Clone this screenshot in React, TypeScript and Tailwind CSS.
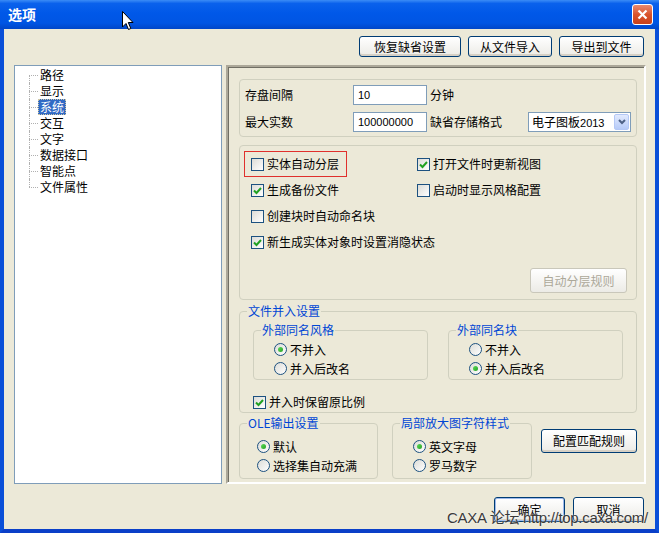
import React from "react";

const cjk = { fontFamily: '"Noto Sans CJK SC", "Liberation Sans", sans-serif' };

function Check({ on }: { on?: boolean }) {
  return (
    <span className="flex h-[13px] w-[13px] shrink-0 items-center justify-center border border-[#1C5180] bg-linear-to-br from-[#DCDCD7] to-white">
      {on && (
        <svg width="9" height="9" viewBox="0 0 9 9">
          <path d="M1 4.5 L3.5 7 L8 2" fill="none" stroke="#21A121" strokeWidth="2" />
        </svg>
      )}
    </span>
  );
}

function Radio({ on }: { on?: boolean }) {
  return (
    <span className="flex h-[13px] w-[13px] shrink-0 items-center justify-center rounded-full border border-[#1C5180] bg-linear-to-br from-[#DCDCD7] to-white">
      {on && <span className="h-[5px] w-[5px] rounded-full bg-linear-to-br from-[#5EDB5A] to-[#21A121]" />}
    </span>
  );
}

function CheckRow({ on, label, className = "" }: { on?: boolean; label: string; className?: string }) {
  return (
    <div className={`flex items-center gap-[3px] ${className}`}>
      <Check on={on} />
      <span>{label}</span>
    </div>
  );
}

function RadioRow({ on, label }: { on?: boolean; label: string }) {
  return (
    <div className="flex h-[19px] items-center gap-[3px]">
      <Radio on={on} />
      <span>{label}</span>
    </div>
  );
}

function XpButton({ label, className = "", disabled, def }: { label: string; className?: string; disabled?: boolean; def?: boolean }) {
  return (
    <div
      className={`flex items-center justify-center rounded-[3px] border bg-linear-to-b from-white to-[#ECEBE6] ${
        disabled
          ? "border-[#C9C7BA] text-[#ACA899]"
          : def
          ? "border-[#003C74] shadow-[inset_0_0_0_1px_#9DB9EB,inset_0_-2px_0_#D6D0C5]"
          : "border-[#003C74] shadow-[inset_0_-2px_0_#D6D0C5]"
      } ${className}`}
    >
      {label}
    </div>
  );
}

function Group({ legend, className = "", children }: { legend?: string; className?: string; children?: React.ReactNode }) {
  return (
    <div className={`relative rounded-[4px] border border-[#D0D0BF] ${className}`}>
      {legend && (
        <span className="absolute -top-[9px] left-[7px] bg-[#ECE9D8] px-[1px] leading-[16px] text-[#0046D5]">{legend}</span>
      )}
      {children}
    </div>
  );
}

const tree = ["路径", "显示", "系统", "交互", "文字", "数据接口", "智能点", "文件属性"];

export default function App() {
  return (
    <div className="relative flex h-[533px] w-[659px] flex-col overflow-hidden text-[12px] text-black" style={cjk}>
      {/* title bar */}
      <div className="flex h-[29px] shrink-0 items-center justify-between bg-[linear-gradient(180deg,#3B8CF6_0%,#0A61EC_12%,#0058E8_45%,#0055E3_80%,#0046C8_100%)] pl-[8px] pr-[6px]">
        <span className="text-[14px] font-bold text-white">选项</span>
        <div className="flex h-[21px] w-[21px] items-center justify-center rounded-[3px] border border-white bg-linear-to-b from-[#E98A6F] via-[#D9532B] to-[#C9401A]">
          <svg width="11" height="11" viewBox="0 0 11 11">
            <path d="M1.5 1.5 L9.5 9.5 M9.5 1.5 L1.5 9.5" stroke="white" strokeWidth="2.2" />
          </svg>
        </div>
      </div>

      {/* body */}
      <div className="flex flex-1 flex-col border-x-4 border-b-4 border-x-[#0A4FD8] border-b-[#0A3FC8] bg-[#ECE9D8]">
        <div className="mt-[7px] flex justify-end gap-[7px] pr-[11px]">
          <XpButton label="恢复缺省设置" className="h-[21px] w-[102px]" />
          <XpButton label="从文件导入" className="h-[21px] w-[84px]" />
          <XpButton label="导出到文件" className="h-[21px] w-[85px]" />
        </div>

        <div className="mt-[8px] flex pl-[10px]">
          {/* tree */}
          <div className="h-[419px] w-[208px] border border-[#7F9DB9] bg-white pt-[1px]">
            {tree.map((t, i) => (
              <div key={t} className="flex h-[16px] items-center pl-[14px]">
                <span className="relative h-[16px] w-[9px]">
                  <span
                    className={`absolute left-0 border-l border-dotted border-[#B0B0B0] ${
                      i === 0 ? "top-[8px] h-[8px]" : i === tree.length - 1 ? "top-0 h-[8px]" : "top-0 h-[16px]"
                    }`}
                  />
                  <span className="absolute left-0 top-[8px] w-[9px] border-t border-dotted border-[#B0B0B0]" />
                </span>
                <span
                  className={`px-[1px] leading-[14px] ${
                    t === "系统" ? "border border-dotted border-[#CEC7A5] bg-[#316AC5] text-white" : "border border-transparent"
                  }`}
                >
                  {t}
                </span>
              </div>
            ))}
          </div>

          {/* panel */}
          <div className="ml-[4px] h-[419px] w-[420px] border-2 border-t-[#ACA899] border-l-[#ACA899] border-r-white border-b-white pl-[11px] pt-[12px] shadow-[inset_1px_1px_0_#716F64]">
            <Group className="h-[58px] w-[398px] pl-[5px] pt-[5px]">
              <div className="flex h-[20px] items-center">
                <span className="w-[108px]">存盘间隔</span>
                <div className="flex h-[20px] w-[74px] items-center border border-[#7F9DB9] bg-white pl-[4px] font-['Liberation_Sans'] text-[11px]">10</div>
                <span className="ml-[3px]">分钟</span>
              </div>
              <div className="mt-[7px] flex h-[20px] items-center">
                <span className="w-[108px]">最大实数</span>
                <div className="flex h-[20px] w-[74px] items-center border border-[#7F9DB9] bg-white pl-[4px] font-['Liberation_Sans'] text-[11px]">100000000</div>
                <span className="ml-[3px] w-[98px]">缺省存储格式</span>
                <div className="flex h-[20px] w-[103px] items-center justify-between border border-[#7F9DB9] bg-white pl-[3px] pr-[1px]">
                  <span>
                    电子图板<span className="font-['Liberation_Sans'] text-[11px]">2013</span>
                  </span>
                  <span className="flex h-[16px] w-[15px] items-center justify-center rounded-[2px] border border-[#B4C8F6] bg-linear-to-b from-[#E2EAFE] to-[#B6CBF8]">
                    <svg width="8" height="6" viewBox="0 0 8 6">
                      <path d="M1 1 L4 4 L7 1" fill="none" stroke="#4D6185" strokeWidth="2" />
                    </svg>
                  </span>
                </div>
              </div>
            </Group>

            <Group className="mt-[8px] flex h-[155px] w-[398px] flex-col pl-[4px] pt-[5px]">
              <div className="grid grid-cols-[173px_1fr]">
                <div className="flex h-[26px] w-[103px] items-center border border-[#E0302C] pl-[6px]">
                  <CheckRow label="实体自动分层" />
                </div>
                <div className="flex h-[26px] items-center">
                  <CheckRow on label="打开文件时更新视图" />
                </div>
                <div className="flex h-[26px] items-center pl-[7px]">
                  <CheckRow on label="生成备份文件" />
                </div>
                <div className="flex h-[26px] items-center">
                  <CheckRow label="启动时显示风格配置" />
                </div>
                <div className="col-span-2 flex h-[26px] items-center pl-[7px]">
                  <CheckRow label="创建块时自动命名块" />
                </div>
                <div className="col-span-2 flex h-[26px] items-center pl-[7px]">
                  <CheckRow on label="新生成实体对象时设置消隐状态" />
                </div>
              </div>
              <div className="mt-[13px] flex justify-end pr-[9px]">
                <XpButton disabled label="自动分层规则" className="h-[25px] w-[97px]" />
              </div>
            </Group>

            <Group legend="文件并入设置" className="mt-[11px] h-[102px] w-[398px] pl-[13px] pt-[18px]">
              <div className="flex gap-[20px]">
                <Group legend="外部同名风格" className="h-[50px] w-[175px] pl-[20px] pt-[9px]">
                  <RadioRow on label="不并入" />
                  <RadioRow label="并入后改名" />
                </Group>
                <Group legend="外部同名块" className="h-[50px] w-[175px] pl-[20px] pt-[9px]">
                  <RadioRow label="不并入" />
                  <RadioRow on label="并入后改名" />
                </Group>
              </div>
              <CheckRow on label="并入时保留原比例" className="mt-[13px] gap-[2px]" />
            </Group>

            <div className="mt-[10px] flex">
              <Group legend="OLE输出设置" className="h-[56px] w-[139px] pl-[17px] pt-[13px]">
                <RadioRow on label="默认" />
                <RadioRow label="选择集自动充满" />
              </Group>
              <Group legend="局部放大图字符样式" className="ml-[14px] h-[56px] w-[140px] pl-[20px] pt-[13px]">
                <RadioRow on label="英文字母" />
                <RadioRow label="罗马数字" />
              </Group>
              <XpButton label="配置匹配规则" className="ml-[9px] mt-[6px] h-[24px] w-[96px]" />
            </div>
          </div>
        </div>

        <div className="mt-[13px] flex justify-end gap-[8px] pr-[11px]">
          <XpButton def label="确定" className="h-[25px] w-[71px]" />
          <XpButton label="取消" className="h-[25px] w-[71px]" />
        </div>
      </div>

      {/* watermark */}
      <span
        className="absolute left-[447px] top-[507px] text-[15px] tracking-[-0.3px] text-[#3A3A3A] [text-shadow:0_0_2px_#fff]"
        style={{ fontFamily: '"Liberation Sans", "Noto Sans CJK SC", sans-serif' }}
      >
        CAXA 论坛 http://top.caxa.com/
      </span>

      {/* mouse pointer */}
      <svg className="absolute left-[122px] top-[11px]" width="13" height="21" viewBox="0 0 13 21">
        <path d="M0.5 0.5 L0.5 16 L4 12.5 L6.5 18.5 L8.8 17.5 L6.3 11.5 L11 11.5 Z" fill="white" stroke="black" strokeWidth="1" />
      </svg>
    </div>
  );
}
